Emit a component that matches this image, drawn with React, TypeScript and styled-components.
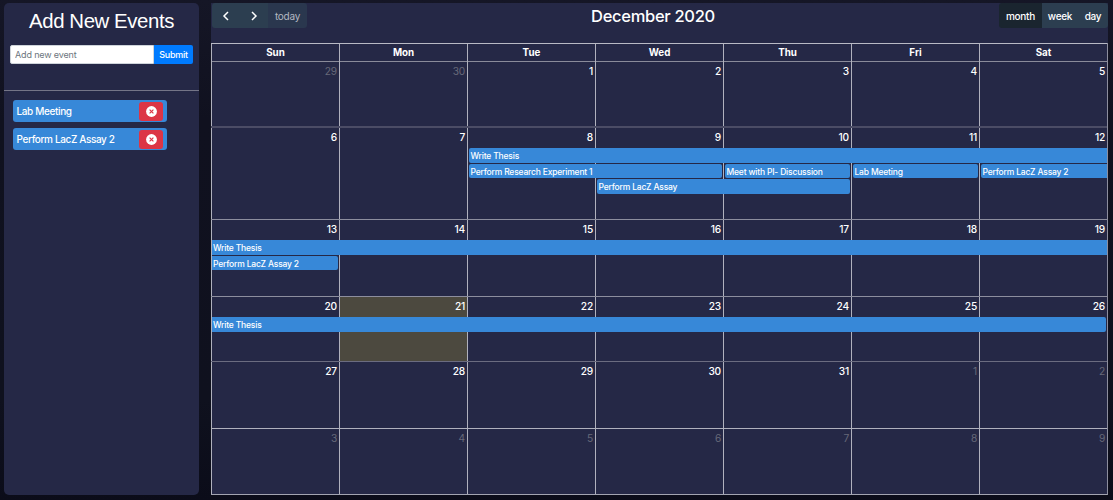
import React from 'react';
import styled, { createGlobalStyle } from 'styled-components';

const Global = createGlobalStyle`
  *, *::before, *::after { box-sizing: border-box; }
  body { margin: 0; background: #0f101f; font-family: Inter, 'Liberation Sans', sans-serif; color: #fff; }
  button, input { font-family: inherit; margin: 0; }
`;

const Page = styled.div`
  display: flex;
  align-items: flex-start;
  gap: 12px;
  width: 1113px;
  height: 500px;
  padding: 3px 0 0 4px;
  overflow: hidden;
  background: linear-gradient(#151626 0, #10111f 120px, #0f111e 400px, #0b0c19 500px);
`;

const Sidebar = styled.aside`
  width: 195px;
  height: 492px;
  border-radius: 5px;
  background: #252846;
`;

const Heading = styled.h1`
  margin: 0;
  padding-top: 5px;
  height: 42px;
  font: 400 20.4px/26px 'Liberation Sans', sans-serif;
  letter-spacing: -0.42px;
  text-align: center;
`;

const EventForm = styled.form`
  display: flex;
  height: 46px;
  padding: 0 6px;
  border-bottom: 1px solid #747587;
`;

const EventInput = styled.input`
  width: 144px;
  height: 19px;
  padding: 0 4px;
  border: 1px solid #ced4da;
  border-radius: 2px 0 0 2px;
  background: #fff;
  font-size: 9px;
  letter-spacing: -0.15px;
  &::placeholder { color: #6c757d; opacity: 1; }
`;

const Submit = styled.button`
  width: 39px;
  height: 19px;
  padding: 0;
  border: 0;
  border-radius: 0 2px 2px 0;
  background: #007bff;
  color: #fff;
  font-size: 9px;
  font-weight: 500;
  letter-spacing: -0.3px;
`;

const EventList = styled.div`
  display: flex;
  flex-direction: column;
  gap: 6px;
  padding: 9px 0 0 9px;
`;

const Draggable = styled.div`
  display: flex;
  align-items: center;
  justify-content: space-between;
  width: 154px;
  height: 22px;
  padding: 0 4px 0 3.5px;
  border-radius: 3px;
  background: #3788d8;
  font-size: 10px;
  font-weight: 500;
  letter-spacing: -0.37px;
`;

const Remove = styled.button`
  display: flex;
  align-items: center;
  justify-content: center;
  width: 24px;
  height: 19px;
  padding: 0;
  border: 0;
  border-radius: 3px;
  background: #dc3545;
`;

const Calendar = styled.main`
  width: 897px;
  height: 492px;
  background: #252846;
`;

const Toolbar = styled.header`
  display: flex;
  justify-content: space-between;
  height: 40px;
  align-items: flex-start;
`;

const Title = styled.h2`
  margin: 0;
  font-size: 16.5px;
  line-height: 27px;
  font-weight: 500;
  letter-spacing: -0.3px;
`;

const ButtonGroup = styled.div<{ $end?: boolean }>`
  display: flex;
  margin-left: ${p => (p.$end ? 0 : 1)}px;
  border-radius: 3px;
  overflow: hidden;
`;

const ToolButton = styled.button<{ $w: number; $tone?: 'active' | 'muted' }>`
  display: flex;
  align-items: center;
  justify-content: center;
  width: ${p => p.$w}px;
  height: 25px;
  padding: 0;
  border: 0;
  background: ${p => (p.$tone === 'active' ? '#1a252f' : p.$tone === 'muted' ? '#2a374e' : '#2c3e50')};
  color: ${p => (p.$tone === 'muted' ? '#b3b7c1' : '#fff')};
  font-size: 10px;
  font-weight: ${p => (p.$tone === 'muted' ? 400 : 500)};
  letter-spacing: -0.25px;
`;

const Grid = styled.div`
  border-right: 1px solid #8d8e9e;
  border-bottom: 1px solid #a3a4b1;
`;

const DayHeader = styled.div`
  display: grid;
  grid-template-columns: repeat(7, 128px);
  height: 18px;
  border-top: 1px solid #b9bac5;
`;

const DayName = styled.div`
  border-left: 1px solid #b0b1bd;
  font-size: 9.8px;
  line-height: 18px;
  font-weight: 700;
  text-align: center;
`;

const Week = styled.div<{ $h: number; $line: string; $thick?: boolean }>`
  display: grid;
  grid-template-columns: repeat(7, 128px);
  grid-template-rows: 20px 15.5px 15.5px 15.5px;
  align-content: start;
  height: ${p => p.$h}px;
  border-top: ${p => (p.$thick ? 2 : 1)}px solid ${p => p.$line};
`;

const Day = styled.div<{ $col: number; $h: number; $dim: boolean; $today: boolean }>`
  grid-column: ${p => p.$col};
  grid-row: 1 / 2;
  height: ${p => p.$h}px;
  padding: 3px 2px 0 0;
  border-left: 1px solid #b0b1bd;
  background: ${p => (p.$today ? '#4c493f' : 'transparent')};
  color: ${p => (p.$dim ? '#676879' : '#fff')};
  font-size: 10.2px;
  line-height: 13px;
  font-weight: ${p => (p.$dim ? 400 : 500)};
  letter-spacing: -0.2px;
  text-align: right;
`;

const CalendarEvent = styled.div<{ $from: number; $to: number; $row: number; $start: boolean; $end: boolean }>`
  z-index: 1;
  grid-column: ${p => p.$from} / ${p => p.$to + 1};
  grid-row: ${p => p.$row + 1};
  height: 14.7px;
  margin: 0.3px ${p => (p.$end ? 1.5 : 0)}px 0 ${p => (p.$start ? 2 : 1)}px;
  padding-left: ${p => (p.$start ? 1.5 : 1)}px;
  border-radius: ${p => `${p.$start ? 2 : 0}px ${p.$end ? '2px 2px' : '0 0'} ${p.$start ? 2 : 0}px`};
  background: #3788d8;
  font-size: 8.5px;
  line-height: 16px;
  font-weight: 500;
  letter-spacing: -0.19px;
  white-space: nowrap;
`;

type Ev = { title: string; from: number; to: number; row: number; start?: boolean; end?: boolean };
type WeekData = { days: number[]; h: number; line: string; thick?: boolean; events?: Ev[] };

const weeks: WeekData[] = [
  { days: [29, 30, 1, 2, 3, 4, 5], h: 65, line: '#8a8b9a' },
  {
    days: [6, 7, 8, 9, 10, 11, 12], h: 93, line: '#4b4c65', thick: true,
    events: [
      { title: 'Write Thesis', from: 3, to: 7, row: 1, start: true },
      { title: 'Perform Research Experiment 1', from: 3, to: 4, row: 2, start: true, end: true },
      { title: 'Meet with PI- Discussion', from: 5, to: 5, row: 2, start: true, end: true },
      { title: 'Lab Meeting', from: 6, to: 6, row: 2, start: true, end: true },
      { title: 'Perform LacZ Assay 2', from: 7, to: 7, row: 2, start: true },
      { title: 'Perform LacZ Assay', from: 4, to: 5, row: 3, start: true, end: true },
    ],
  },
  {
    days: [13, 14, 15, 16, 17, 18, 19], h: 77, line: '#8d8e9e',
    events: [
      { title: 'Write Thesis', from: 1, to: 7, row: 1 },
      { title: 'Perform LacZ Assay 2', from: 1, to: 1, row: 2, end: true },
    ],
  },
  {
    days: [20, 21, 22, 23, 24, 25, 26], h: 65, line: '#8d8e9e',
    events: [{ title: 'Write Thesis', from: 1, to: 7, row: 1, end: true }],
  },
  { days: [27, 28, 29, 30, 31, 1, 2], h: 67, line: '#6b6c80' },
  { days: [3, 4, 5, 6, 7, 8, 9], h: 66, line: '#b0b1bd' },
];

const isOutside = (week: number, day: number) => (week === 0 && day > 7) || (week > 3 && day < 10);

const RemoveIcon = () => (
  <svg width="11" height="11" viewBox="0 0 11 11">
    <circle cx="5.5" cy="5.5" r="5.4" fill="#fff" />
    <path d="M3.6 3.6l3.8 3.8M7.4 3.6L3.6 7.4" stroke="#dc3545" strokeWidth="1.15" />
  </svg>
);

const Chevron = ({ next }: { next?: boolean }) => (
  <svg width="10" height="10" viewBox="0 0 10 10" fill="none" stroke="#fff" strokeWidth="1.5">
    <path d={next ? 'M3 1L7 5L3 9' : 'M7 1L3 5L7 9'} />
  </svg>
);

export default function App() {
  return (
    <Page>
      <Global />
      <Sidebar>
        <Heading>Add New Events</Heading>
        <EventForm>
          <EventInput placeholder="Add new event" />
          <Submit type="button">Submit</Submit>
        </EventForm>
        <EventList>
          {['Lab Meeting', 'Perform LacZ Assay 2'].map(name => (
            <Draggable key={name}>
              {name}
              <Remove aria-label="Remove"><RemoveIcon /></Remove>
            </Draggable>
          ))}
        </EventList>
      </Sidebar>
      <Calendar>
        <Toolbar>
          <ButtonGroup>
            <ToolButton $w={28} aria-label="Previous"><Chevron /></ToolButton>
            <ToolButton $w={28} aria-label="Next"><Chevron next /></ToolButton>
            <ToolButton $w={39} $tone="muted">today</ToolButton>
          </ButtonGroup>
          <Title>December 2020</Title>
          <ButtonGroup $end>
            <ToolButton $w={43} $tone="active">month</ToolButton>
            <ToolButton $w={36}>week</ToolButton>
            <ToolButton $w={30}>day</ToolButton>
          </ButtonGroup>
        </Toolbar>
        <Grid>
          <DayHeader>
            {['Sun', 'Mon', 'Tue', 'Wed', 'Thu', 'Fri', 'Sat'].map(d => <DayName key={d}>{d}</DayName>)}
          </DayHeader>
          {weeks.map((w, i) => (
            <Week key={i} $h={w.h} $line={w.line} $thick={w.thick}>
              {w.days.map((d, c) => (
                <Day
                  key={c}
                  $col={c + 1}
                  $h={w.h - (w.thick ? 2 : 1)}
                  $dim={isOutside(i, d)}
                  $today={i === 3 && d === 21}
                >
                  {d}
                </Day>
              ))}
              {w.events?.map(e => (
                <CalendarEvent
                  key={e.title}
                  $from={e.from}
                  $to={e.to}
                  $row={e.row}
                  $start={!!e.start}
                  $end={!!e.end}
                >
                  {e.title}
                </CalendarEvent>
              ))}
            </Week>
          ))}
        </Grid>
      </Calendar>
    </Page>
  );
}
